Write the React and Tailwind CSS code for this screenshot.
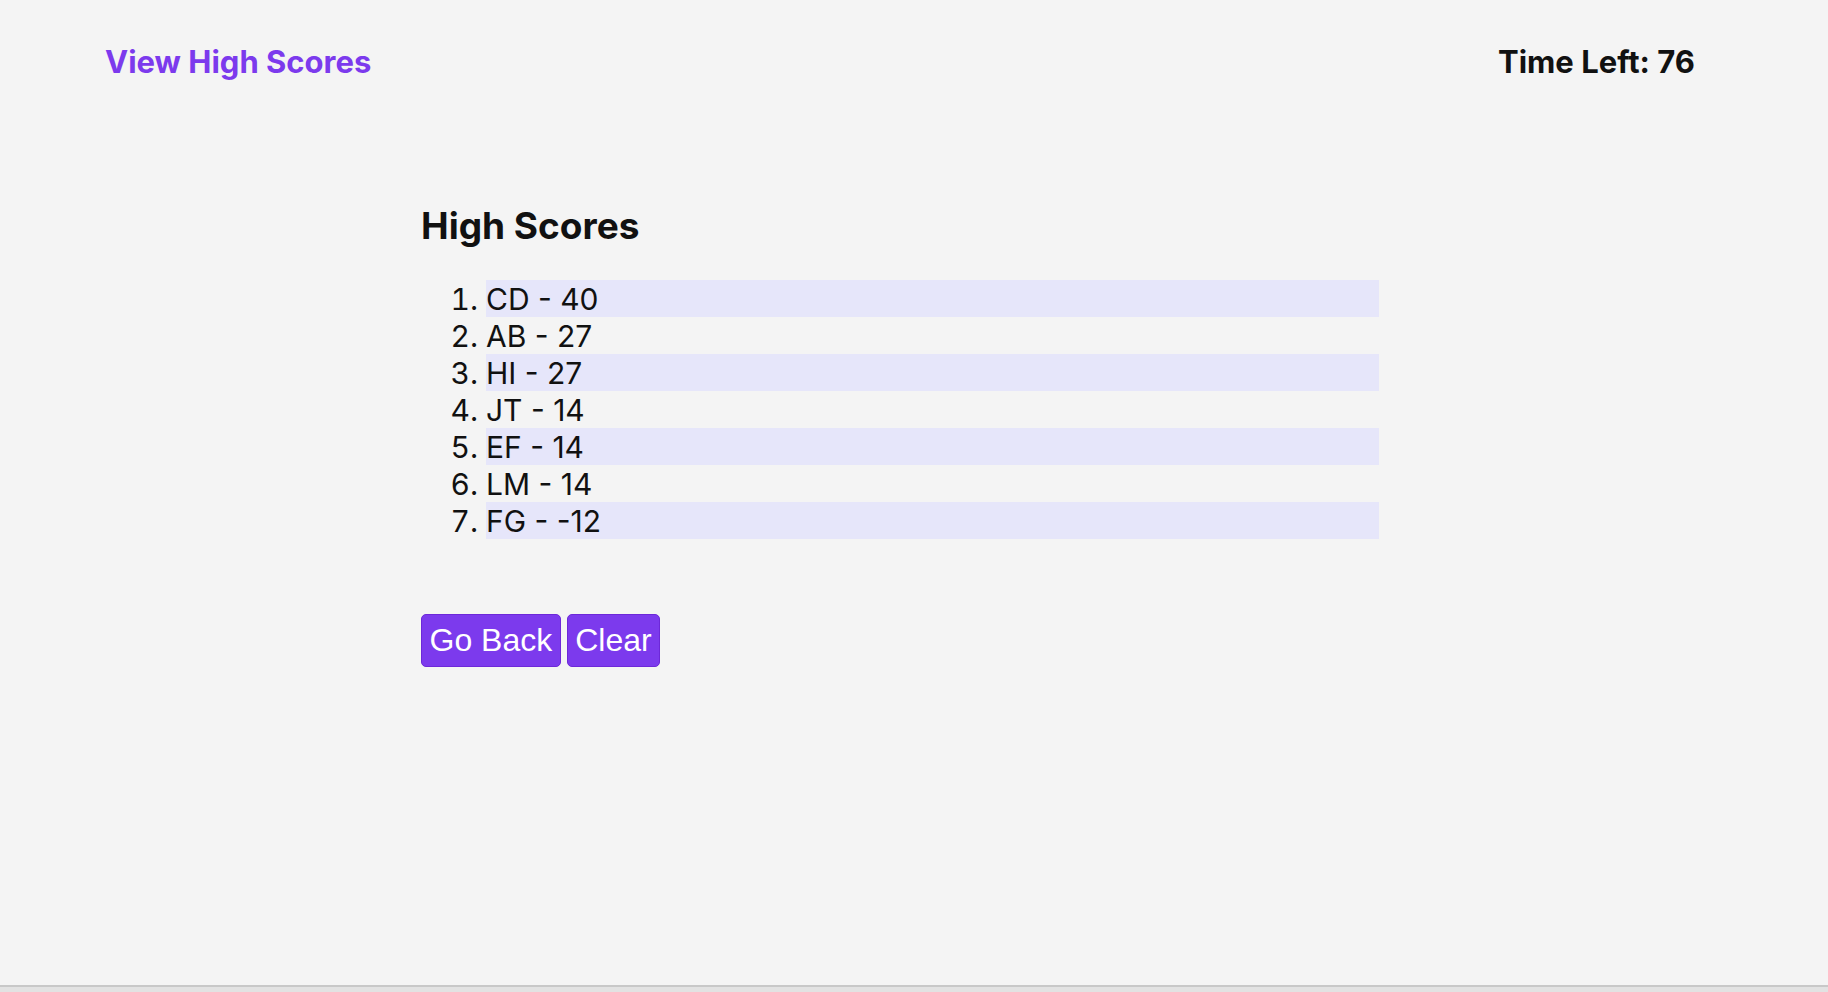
export default function App() {
  const scores = [
    "CD - 40",
    "AB - 27",
    "HI - 27",
    "JT - 14",
    "EF - 14",
    "LM - 14",
    "FG - -12",
  ];
  return (
    <div className="w-[1828px] h-[992px] bg-[#f4f4f4] flex flex-col font-['Inter',sans-serif] text-[#111] overflow-hidden">
      <header className="flex justify-between items-start pl-[105px] pr-[133px] pt-[44px]">
        <a className="text-[#7c3aed] font-bold text-[31px] leading-[36px] cursor-pointer">View High Scores</a>
        <div className="font-bold text-[31px] leading-[36px]">Time Left: 76</div>
      </header>
      <main className="flex-1 ml-[421px] w-[958px] pt-[124px]">
        <h2 className="font-bold text-[37px] leading-[44px]">High Scores</h2>
        <ol className="list-decimal pl-[65px] mt-[32px] text-[30px] leading-[37px]">
          {scores.map((s, i) => (
            <li key={i} className={i % 2 === 0 ? "bg-[#e6e6fa] pt-[1px] leading-[36px]" : "pt-[1px] leading-[36px]"}>
              {s}
            </li>
          ))}
        </ol>
        <div className="flex gap-[6px] mt-[75px]">
          <button className="bg-[#7c3aed] text-white font-['Liberation_Sans',Arial,sans-serif] text-[32px] leading-[37px] px-[7.5px] py-[7px] border border-[#6d28d9] rounded-[5px]">
            Go Back
          </button>
          <button className="bg-[#7c3aed] text-white font-['Liberation_Sans',Arial,sans-serif] text-[32px] leading-[37px] px-[7.5px] py-[7px] border border-[#6d28d9] rounded-[5px]">
            Clear
          </button>
        </div>
      </main>
      <div className="h-[2px] bg-[#c8c8c8]" />
      <div className="h-[5px] bg-[#e2e2e2]" />
    </div>
  );
}
